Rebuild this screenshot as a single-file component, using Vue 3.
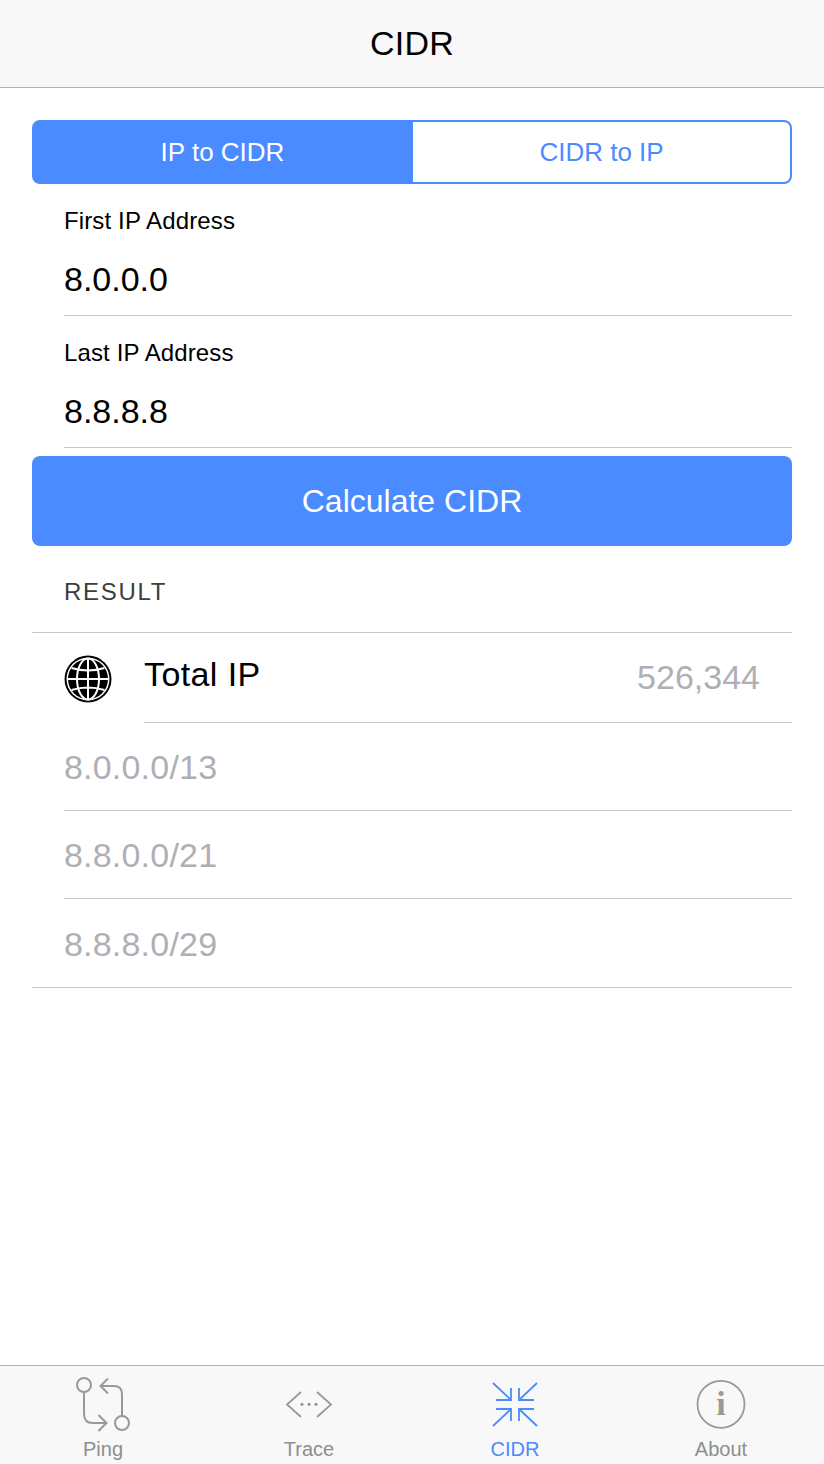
<script setup>
const fields = [
  { label: 'First IP Address', value: '8.0.0.0' },
  { label: 'Last IP Address', value: '8.8.8.8' },
]
const blocks = ['8.0.0.0/13', '8.8.0.0/21', '8.8.8.0/29']
</script>

<template>
  <div class="screen">
    <header class="nav">CIDR</header>

    <main class="content">
      <div class="segment">
        <div class="seg seg-on">IP to CIDR</div>
        <div class="seg">CIDR to IP</div>
      </div>

      <div v-for="f in fields" :key="f.label" class="field">
        <div class="field-label">{{ f.label }}</div>
        <div class="field-value">{{ f.value }}</div>
      </div>

      <button class="calc" type="button">Calculate CIDR</button>

      <div class="result-title">RESULT</div>

      <div class="list">
        <div class="total">
          <svg class="globe" width="48" height="48" viewBox="0 0 48 48">
            <circle cx="24" cy="24" r="23.500" fill="#000" />
            <circle cx="24" cy="24" r="21.500" fill="#fff" />
            <circle cx="24" cy="24" r="20" fill="#000" />
            <g fill="none" stroke="#fff" stroke-width="2">
              <ellipse cx="24" cy="24" rx="11" ry="20.500" />
              <path d="M24 4v40M4 24h40M7.500 13q16.500 5 33 0M7.500 35q16.500-5 33 0" />
            </g>
          </svg>
          <div class="total-body">
            <span class="total-name">Total IP</span>
            <span class="total-count">526,344</span>
          </div>
        </div>
        <div v-for="b in blocks" :key="b" class="block">
          <span>{{ b }}</span>
        </div>
      </div>
    </main>

    <nav class="tabs">
      <div class="tab">
        <svg class="tab-icon" width="60" height="60" viewBox="0 0 60 60" fill="none" stroke="#999" stroke-width="2">
          <circle cx="11" cy="11" r="7" />
          <circle cx="49" cy="49" r="7" />
          <path d="M11 18v22q0 9 9 9h13.500M25.500 41l8 8-8 8" />
          <path d="M49 42V20q0-8-8-8H27.500M35 4.500L27.500 12l7.500 7.500" />
        </svg>
        <span>Ping</span>
      </div>
      <div class="tab">
        <svg class="tab-icon" width="60" height="60" viewBox="0 0 60 60" fill="none" stroke="#999" stroke-width="1.800">
          <path d="M22 18L8 30.500 22 43M38 18l14 12.500L38 43" />
          <g fill="#8e8e8e" stroke="none">
            <circle cx="23" cy="30.300" r="1.500" />
            <circle cx="30" cy="30.300" r="1.500" />
            <circle cx="37" cy="30.300" r="1.500" />
          </g>
        </svg>
        <span>Trace</span>
      </div>
      <div class="tab tab-on">
        <svg class="tab-icon" width="60" height="60" viewBox="0 0 60 60" fill="none" stroke="#4a8bff" stroke-width="1.800">
          <path d="M8 9l18 17M26 14v12H11M52 9L34 26M34 14v12h15" />
          <path d="M8 52l18-17M26 47V35H11M52 52L34 35M34 47V35h15" />
        </svg>
        <span>CIDR</span>
      </div>
      <div class="tab">
        <svg class="tab-icon" width="60" height="60" viewBox="0 0 60 60">
          <circle cx="30" cy="30.300" r="23.500" fill="none" stroke="#999" stroke-width="1.800" />
          <text x="30" y="41" text-anchor="middle" class="info-i">i</text>
        </svg>
        <span>About</span>
      </div>
    </nav>
  </div>
</template>

<style scoped>
.screen {
  width: 824px;
  height: 1464px;
  display: flex;
  flex-direction: column;
  background: #fff;
  color: #000;
  font-family: "Liberation Sans", Arial, sans-serif;
}
.nav {
  height: 87px;
  flex: none;
  display: flex;
  align-items: center;
  justify-content: center;
  background: #f8f8f8;
  border-bottom: 1px solid #b2b2b2;
  font-size: 34px;
  letter-spacing: 0.2px;
}
.content {
  flex: 1;
  padding: 32px 32px 0;
}
.segment {
  display: flex;
  height: 64px;
  box-sizing: border-box;
  border: 2px solid #4a8bff;
  border-radius: 8px;
  overflow: hidden;
  background: #4a8bff;
}
.seg {
  flex: 1;
  display: flex;
  align-items: center;
  justify-content: center;
  font-size: 26px;
  color: #4a8bff;
  background: #fff;
}
.seg-on {
  flex: none;
  box-sizing: border-box;
  width: 379px;
  padding-right: 2px;
  background: #4a8bff;
  color: #fff;
}
.field {
  height: 132px;
  box-sizing: border-box;
  margin-left: 32px;
  padding-top: 23px;
  border-bottom: 1px solid #c8c8c8;
}
.field-label {
  font-size: 24px;
  line-height: 28px;
  letter-spacing: 0.13px;
}
.field-value {
  margin-top: 24px;
  font-size: 34px;
  line-height: 40px;
}
.calc {
  display: block;
  width: 100%;
  height: 90px;
  margin-top: 8px;
  border: 0;
  border-radius: 8px;
  background: #4a8bff;
  color: #fff;
  font-family: inherit;
  font-size: 32px;
}
.result-title {
  height: 87px;
  box-sizing: border-box;
  padding: 32px 0 0 32px;
  font-size: 24px;
  line-height: 28px;
  letter-spacing: 1.7px;
  color: #3d3d3d;
  border-bottom: 1px solid #c8c8c8;
}
.total {
  display: flex;
  height: 90px;
}
.globe {
  flex: none;
  margin: 22px 0 0 32px;
}
.total-body {
  flex: 1;
  margin-left: 32px;
  display: flex;
  justify-content: space-between;
  padding-right: 32px;
  border-bottom: 1px solid #c8c8c8;
}
.total-name {
  margin-top: 21px;
  font-size: 34px;
  line-height: 40px;
  letter-spacing: 0.4px;
}
.total-count {
  margin-top: 24px;
  font-size: 34px;
  line-height: 40px;
  color: #afafb5;
}
.block {
  height: 88px;
  box-sizing: border-box;
  margin-left: 32px;
  padding-top: 24px;
  border-bottom: 1px solid #c8c8c8;
  font-size: 34px;
  line-height: 40px;
  letter-spacing: 0.2px;
  color: #afafb5;
}
.block:last-child {
  height: 89px;
  margin-left: 0;
  padding: 25px 0 0 32px;
}
.tabs {
  height: 99px;
  flex: none;
  box-sizing: border-box;
  display: grid;
  grid-template-columns: repeat(4, 206px);
  background: #f8f8f8;
  border-top: 1px solid #b2b2b2;
}
.tab {
  display: flex;
  flex-direction: column;
  align-items: center;
  font-size: 20px;
  line-height: 24px;
  color: #8e8e8e;
}
.tab-icon {
  flex: none;
  margin-top: 8px;
  margin-bottom: 3px;
  height: 60px;
}
.tab-on {
  color: #4a8bff;
}
.info-i {
  font-family: "Liberation Serif", serif;
  font-weight: 700;
  font-size: 34px;
  fill: #999;
}
</style>
